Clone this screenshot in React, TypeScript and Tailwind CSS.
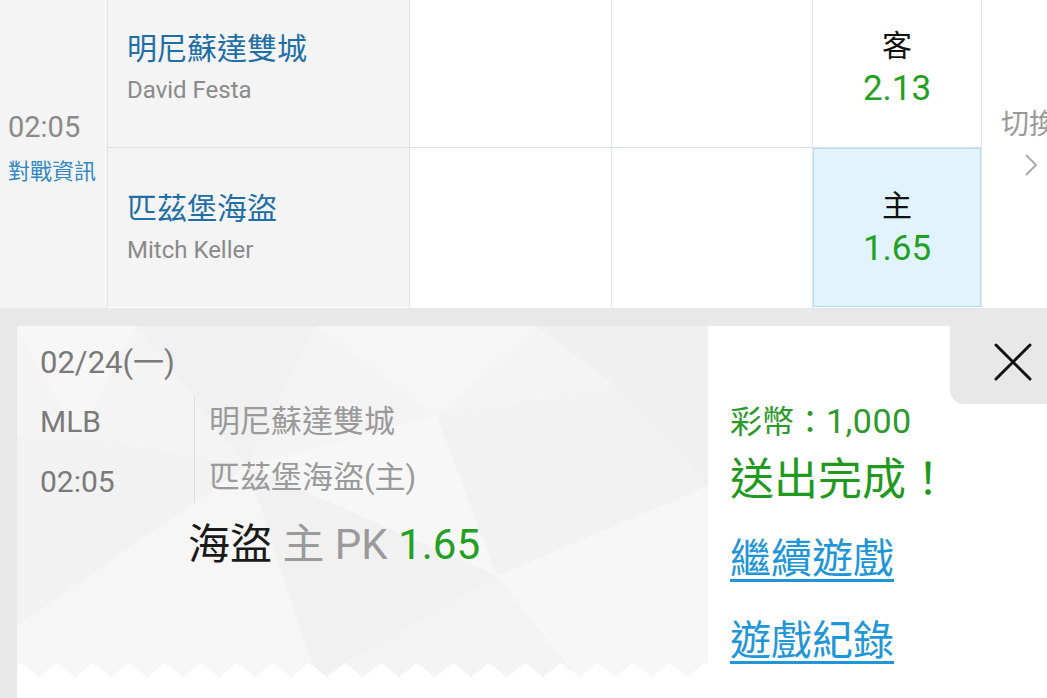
import React from 'react';

const font = { fontFamily: "Roboto, 'Noto Sans CJK TC', sans-serif" };

function TeamCell({ name, pitcher, last }: { name: string; pitcher: string; last?: boolean }) {
  return (
    <div className={`h-[159px] flex flex-col justify-center pl-[19px] bg-[#f4f4f4] ${last ? '' : 'border-b border-[#d5e2ea]'}`}>
      <div className="text-[30px] leading-[40px] text-[#1f6fa6]">{name}</div>
      <div className="text-[24px] leading-[34px] text-[#8a8a8a] mt-[4px]">{pitcher}</div>
    </div>
  );
}

function OddsCell({ side, odds, active }: { side: string; odds: string; active?: boolean }) {
  return (
    <div
      className={`h-[159px] flex flex-col items-center justify-center ${
        active ? 'bg-[#e1f4fd] border border-[#b1dbee]' : 'bg-white border-b border-[#d5e2ea]'
      }`}
    >
      <div className="text-[30px] leading-[40px] text-[#111]">{side}</div>
      <div className="text-[35px] leading-[42px] text-[#22a022] mt-[2px]">{odds}</div>
    </div>
  );
}

// zigzag tear at the bottom of the ticket: white teeth pointing up
function Zigzag() {
  const w = 36;
  const pts: string[] = [];
  for (let i = -1; i < 21; i++) {
    pts.push(`L${i * w + 4 - w / 2} 15`, `L${i * w + 4} 1`);
  }
  return (
    <svg className="absolute left-0 bottom-0" width="691" height="16" viewBox="0 0 691 16">
      <path d={`M-50 16 ${pts.join(' ')} L760 16 Z`} fill="#ffffff" />
    </svg>
  );
}

function Pattern() {
  return (
    <svg className="absolute inset-0" width="691" height="352" viewBox="0 0 691 352">
      <polygon points="0,0 120,0 60,110" fill="#f7f7f7" />
      <polygon points="120,0 300,0 230,140" fill="#f1f1f1" />
      <polygon points="300,0 520,0 420,90" fill="#f6f6f6" />
      <polygon points="520,0 691,0 691,160 600,60" fill="#f0f0f0" />
      <polygon points="0,110 60,110 230,140 0,300" fill="#f2f2f2" />
      <polygon points="230,140 420,90 480,250" fill="#f7f7f7" />
      <polygon points="420,90 600,60 691,160 480,250" fill="#f2f2f2" />
      <polygon points="0,300 230,140 300,352 0,352" fill="#f6f6f6" />
      <polygon points="230,140 480,250 300,352" fill="#f1f1f1" />
      <polygon points="480,250 691,160 691,352 560,352" fill="#f7f7f7" />
      <polygon points="480,250 560,352 300,352" fill="#f3f3f3" />
    </svg>
  );
}

export default function App() {
  return (
    <div className="w-[1047px] h-[698px] overflow-hidden bg-[#e8e8e8]" style={font}>
      {/* match table */}
      <div className="flex h-[319px] mt-[-11px] bg-white">
        <div className="w-[108px] shrink-0 bg-[#f4f4f4] border-r border-[#e2e2e2] flex flex-col justify-center pl-[8px] pb-[2px]">
          <div className="text-[29px] leading-[36px] text-[#8a8a8a]">02:05</div>
          <div className="text-[22px] leading-[30px] text-[#3489c2] mt-[12px] whitespace-nowrap">對戰資訊</div>
        </div>
        <div className="w-[302px] shrink-0 border-r border-[#e2e2e2] flex flex-col">
          <TeamCell name="明尼蘇達雙城" pitcher="David Festa" />
          <TeamCell name="匹茲堡海盜" pitcher="Mitch Keller" last />
        </div>
        <div className="w-[202px] shrink-0 border-r border-[#e3e8ec] flex flex-col">
          <div className="h-[159px] border-b border-[#d5e2ea]" />
          <div className="h-[159px]" />
        </div>
        <div className="w-[201px] shrink-0 border-r border-[#e3e8ec] flex flex-col">
          <div className="h-[159px] border-b border-[#d5e2ea]" />
          <div className="h-[159px]" />
        </div>
        <div className="w-[168px] shrink-0 flex flex-col">
          <OddsCell side="客" odds="2.13" />
          <OddsCell side="主" odds="1.65" active />
        </div>
        <div className="flex-1 border-l border-[#e3e8ec] flex flex-col justify-center pl-[19px] pb-[14px] overflow-hidden">
          <div className="text-[28px] leading-[36px] text-[#9a9a9a] whitespace-nowrap">切換</div>
          <svg className="ml-[23px] mt-[10px]" width="14" height="24" viewBox="0 0 14 24">
            <path d="M2 2 L12 12 L2 22" fill="none" stroke="#aaaaaa" strokeWidth="2" />
          </svg>
        </div>
      </div>

      {/* ticket result */}
      <div className="pl-[17px] pt-[18px]">
        <div className="flex bg-white h-[380px]">
          <div className="relative w-[691px] h-[352px] bg-[#f4f4f4] shrink-0">
            <Pattern />
            <Zigzag />
            <div className="relative pl-[23px] pt-[16px] text-[#7a7a7a]">
              <div className="text-[31px] leading-[42px]">02/24(一)</div>
              <div className="flex mt-[12px]">
                <div className="w-[154px] shrink-0 mt-[-4px]">
                  <div className="text-[30px] leading-[60px]">MLB</div>
                  <div className="text-[30px] leading-[60px]">02:05</div>
                </div>
                <div className="border-l border-[#dcdcdc] h-[107px] pl-[14px] text-[#9a9a9a]">
                  <div className="text-[31px] leading-[56px] mt-[-2px]">明尼蘇達雙城</div>
                  <div className="text-[31px] leading-[56px]">匹茲堡海盜(主)</div>
                </div>
              </div>
              <div className="pl-[148px] mt-[8px] text-[42px] leading-[50px] whitespace-nowrap">
                <span className="text-[#1a1a1a]">海盜</span>
                <span className="text-[#9a9a9a]"> 主 PK </span>
                <span className="text-[#22a022]">1.65</span>
              </div>
            </div>
          </div>
          <div className="relative flex-1 pl-[22px] pt-[74px]">
            <div className="absolute top-0 right-0 w-[97px] h-[78px] bg-[#e8e8e8] rounded-bl-[14px] flex items-start justify-end pt-[17px] pr-[15px]">
              <svg width="38" height="38" viewBox="0 0 38 38">
                <path d="M2 2 L36 36 M36 2 L2 36" stroke="#111111" strokeWidth="3" strokeLinecap="round" />
              </svg>
            </div>
            <div className="text-[32px] leading-[42px] text-[#2b9a2b] whitespace-nowrap">
              彩幣：<span className="text-[34px] tracking-[0.5px]">1,000</span>
            </div>
            <div className="text-[44px] leading-[58px] text-[#1f9a1f] mt-[8px] whitespace-nowrap">送出完成！</div>
            <div className="mt-[22px]">
              <a className="text-[41px] leading-[56px] text-[#1f96d8] underline underline-offset-[6px] decoration-[3px]">繼續遊戲</a>
            </div>
            <div className="mt-[26px]">
              <a className="text-[41px] leading-[56px] text-[#1f96d8] underline underline-offset-[6px] decoration-[3px]">遊戲紀錄</a>
            </div>
          </div>
        </div>
      </div>
    </div>
  );
}
